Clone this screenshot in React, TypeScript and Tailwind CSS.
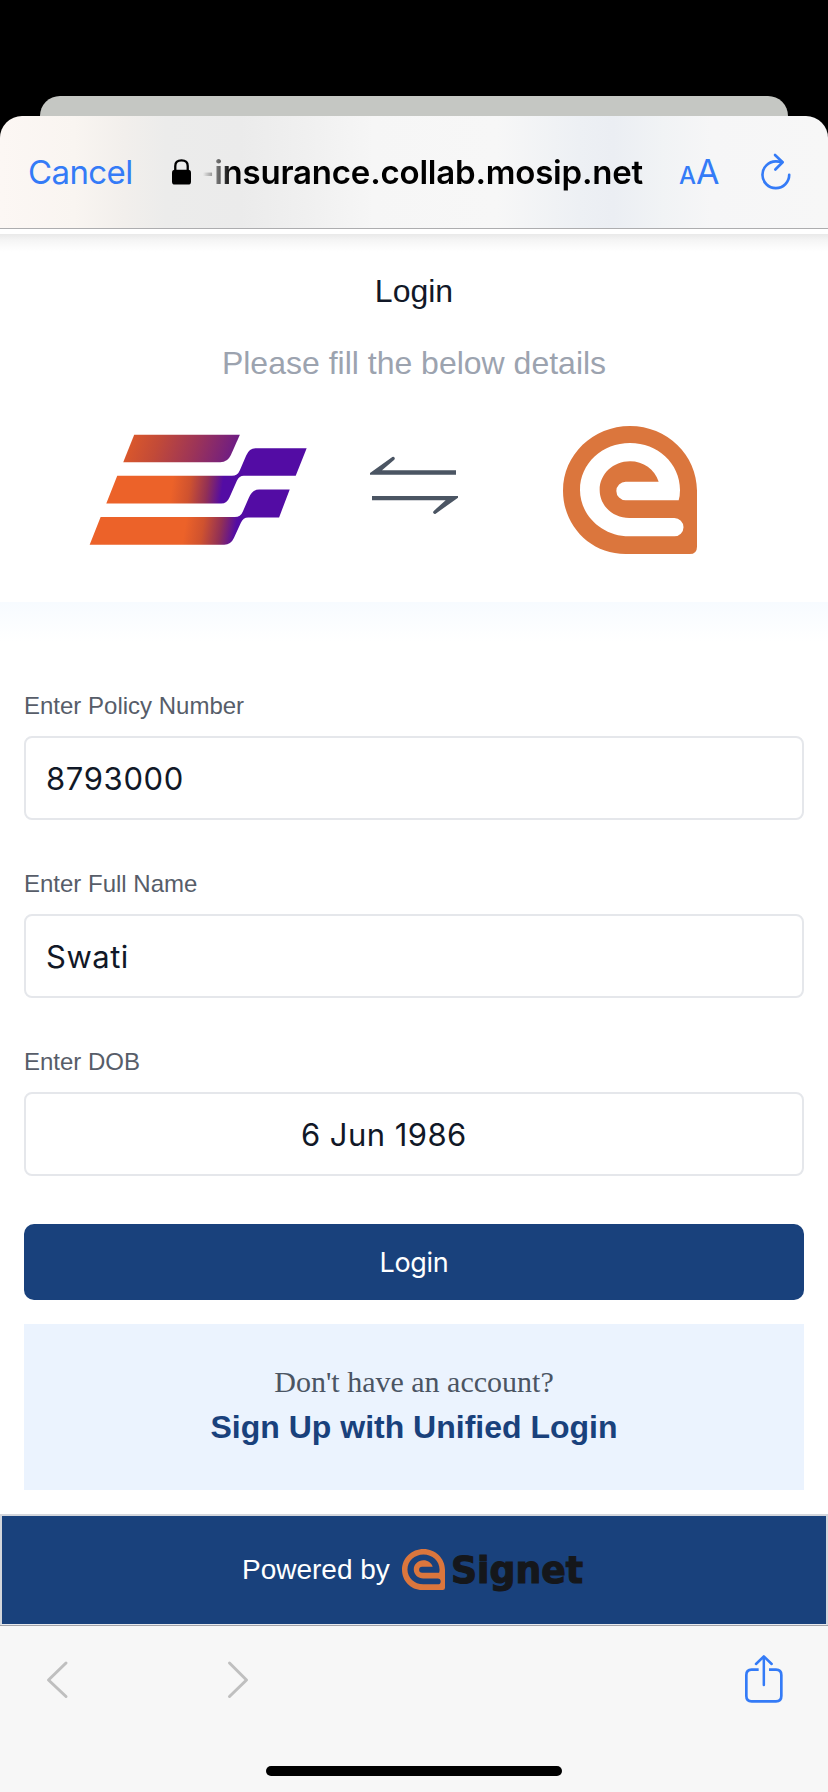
import React from "react";

const INTER = "font-['Inter',sans-serif]";

function ESymbol({ className }: { className: string }) {
  return (
    <svg viewBox="609 78 402 384" className={className} preserveAspectRatio="none" aria-hidden="true">
      <path
        fill="#db763d"
        fillRule="evenodd"
        d="M810 78C921 78 1011 165 1011 272V440Q1011 462 989 462H797C690 462 609 376 609 272C609 164 699 78 810 78ZM660 270C660 345 725 409 808 409H943A27.5 27.5 0 0 0 943 354H808C760 354 719 318 719 270C719 222 760 184 810 184C850 184 884 208 896 245H797A28 28 0 0 0 797 301H956Q960 288 960 270C960 190 893 129 810 129C727 129 660 190 660 270Z"
      />
    </svg>
  );
}

function PartnerLogo() {
  return (
    <svg viewBox="27 522 654 334" className="-mt-[3px] h-[111px] w-[218px]" aria-hidden="true">
      <defs>
        <linearGradient id="bar1" gradientUnits="userSpaceOnUse" x1="160" y1="520" x2="460" y2="620">
          <stop offset="0" stopColor="#d9572c" />
          <stop offset="0.25" stopColor="#c24a38" />
          <stop offset="0.6" stopColor="#9c3458" />
          <stop offset="1" stopColor="#6a1a88" />
        </linearGradient>
        <linearGradient id="bar2" gradientUnits="userSpaceOnUse" x1="275" y1="680" x2="425" y2="700">
          <stop offset="0" stopColor="#ec6229" />
          <stop offset="0.35" stopColor="#cf522f" />
          <stop offset="0.7" stopColor="#923055" />
          <stop offset="1" stopColor="#530ca4" />
        </linearGradient>
        <linearGradient id="bar3" gradientUnits="userSpaceOnUse" x1="315" y1="800" x2="465" y2="825">
          <stop offset="0" stopColor="#ec6229" />
          <stop offset="0.35" stopColor="#cf522f" />
          <stop offset="0.7" stopColor="#923055" />
          <stop offset="1" stopColor="#530ca4" />
        </linearGradient>
      </defs>
      <path fill="url(#bar1)" d="M162 524H480L453 585Q443 607 421 607H129Z" />
      <path
        fill="url(#bar2)"
        d="M111 648H456Q473 648 480 631L499 587Q508 565 527 565H681L648 648H492Q478 648 471 663L449 712Q441 731 424 731H78Z"
      />
      <path
        fill="url(#bar3)"
        d="M61 772H465Q482 772 489 755L507 714Q517 689 538 689H630L598 773H505Q490 773 483 789L462 835Q453 855 433 855H28Z"
      />
    </svg>
  );
}

function ExchangeArrows() {
  return (
    <svg viewBox="30 168 264 174" className="h-[58px] w-[88px]" fill="#4b5563" aria-hidden="true">
      <path d="M30 219L97 171Q101 169 104 173Q106 177 102 180L66 211H288V224H30Z" />
      <path d="M294 293L227 341Q223 343 220 339Q218 335 222 332L257 301H36V288H294Z" />
    </svg>
  );
}

function Field({ label, value, valueClass }: { label: string; value: string; valueClass: string }) {
  return (
    <div className="flex flex-col">
      <label className="h-8 text-[24px] leading-8 text-[#575d69]">{label}</label>
      <div className="mt-[14px] flex h-[84px] items-center rounded-lg border-2 border-[#e5e7eb] bg-white px-5 pt-[2px]">
        <span className={`${INTER} whitespace-pre text-[31px] leading-10 text-[#111827] ${valueClass}`}>{value}</span>
      </div>
    </div>
  );
}

function BrowserHeader() {
  return (
    <div className="bg-black">
      <div className="flex h-[116px] flex-col justify-end px-10">
        <div className="h-5 rounded-t-[20px] bg-[#c5c7c3]" />
      </div>
      <header className="flex h-[113px] items-start rounded-t-[22px] border-b border-[#adadaf] bg-[linear-gradient(90deg,#fcf7f4_0%,#f9f5f1_9%,#f2efec_15%,#ececeb_20%,#ebebeb_29%,#f0f0f0_37%,#f6f6f6_45%,#f7f7f7_60%,#edf0f4_70%,#ebeef3_74%,#f1f3f5_80%,#f6f6f7_86%,#f7f7f7_100%)] pl-7 pt-[35px]">
        <span className={`${INTER} w-[144px] text-[33px] leading-[42px] tracking-[-0.6px] text-[#347bf7]`}>Cancel</span>
        <svg viewBox="515 237 58 79" className="mt-2 h-[26px] w-[19px]" aria-hidden="true">
          <rect x="515" y="270" width="58" height="45" rx="9" />
          <path d="M525 274V258Q525 241 544 241Q563 241 563 258V274" fill="none" stroke="#000" strokeWidth="7" />
        </svg>
        <span
          className={`${INTER} ml-2 w-[445px] whitespace-nowrap bg-[linear-gradient(90deg,#00000000_4px,#00000060_14px,#00000098_21px,#000_32px)] bg-clip-text text-[33px] font-semibold leading-[42px] tracking-[-0.2px] text-transparent`}
        >
          -insurance.collab.mosip.net
        </span>
        <span className={`${INTER} ml-[35px] flex w-[40px] items-baseline leading-[42px] text-[#347bf7]`}>
          <span className="text-[24px] font-medium">A</span>
          <span className="text-[34px]">A</span>
        </span>
        <svg viewBox="1034 220 96 112" className="ml-[41px] mt-[2px] h-[37px] w-[32px]" fill="none" stroke="#347bf7" strokeWidth="8" strokeLinecap="round" strokeLinejoin="round" aria-hidden="true">
          <path d="M1122 286A40.500 40.500 0 1 1 1081.500 245.500Q1090 245.500 1101 247.500" />
          <path d="M1079 226L1102 248L1080 270" />
        </svg>
      </header>
    </div>
  );
}

export default function App() {
  return (
    <div className="flex h-[1792px] w-[828px] flex-col overflow-hidden bg-white font-['Liberation_Sans',Arial,sans-serif]">
      <BrowserHeader />
      <div className="mt-[5px] h-[18px] bg-[linear-gradient(180deg,#e9e9e9,#f5f5f5_35%,#fcfcfc_75%,#ffffff)]" />

      <section className="flex h-[350px] flex-col items-center pt-[19px]">
        <h1 className="text-[32px] leading-10 text-[#111827]">Login</h1>
        <p className="mt-8 text-[32px] leading-10 text-[#9ca3af]">Please fill the below details</p>
        <div className="mt-[42px] flex h-[132px] w-full items-center pl-[89px]">
          <PartnerLogo />
          <div className="-mt-3 ml-[63px]">
            <ExchangeArrows />
          </div>
          <ESymbol className="-mt-[2px] ml-[105px] h-32 w-[134px]" />
        </div>
      </section>

      <div className="h-10 shrink-0 bg-[linear-gradient(180deg,#f7fbff,#ffffff)]" />

      <main className="flex flex-col px-6 pt-[48px]">
        <div className="flex flex-col gap-12">
          <Field label="Enter Policy Number" value="8793000" valueClass="tracking-[0.65px]" />
          <Field label="Enter Full Name" value="Swati" valueClass="tracking-[0.5px]" />
          <Field label="Enter DOB" value="6 Jun 1986" valueClass="ml-[255px] tracking-[0.45px]" />
        </div>
        <button className={`${INTER} mt-12 h-[76px] rounded-[10px] bg-[#19417c] pt-[2px] text-[27px] tracking-[-0.3px] text-white`}>Login</button>
        <div className="mt-6 flex h-[166px] flex-col items-center bg-[#ebf3fe] pt-[38px]">
          <p className="font-['Liberation_Serif',serif] text-[30px] leading-10 text-[#4b5563]">Don't have an account?</p>
          <a className="mt-[5px] text-[32px] font-bold leading-10 text-[#19417c]">Sign Up with Unified Login</a>
        </div>
      </main>

      <footer className="mt-6 flex h-[111px] shrink-0 items-center border-2 border-b border-[#d3d6dc] border-b-[#e8eaee] bg-[#19417c] pl-[240px]">
        <span className="text-[28px] leading-10 text-white">Powered by</span>
        <ESymbol className="-mt-[2px] ml-[12px] h-[41px] w-[43px]" />
        <svg className="ml-[6px] h-[56px] w-[140px] overflow-visible" viewBox="0 0 140 56" aria-label="Signet">
          <text
            x="0"
            y="41"
            textLength="132"
            lengthAdjust="spacingAndGlyphs"
            fill="#15171b"
            stroke="#15171b"
            strokeWidth="1.2"
            className="font-['DejaVu_Sans',sans-serif] text-[38px] font-bold"
          >
            Signet
          </text>
        </svg>
      </footer>

      <nav className="flex h-[167px] shrink-0 flex-col items-center border-t border-[#a3a3a8] bg-[#f7f7f7]">
        <div className="flex h-[140px] w-full items-start pl-[46px] pt-[29px]">
          <svg viewBox="0 0 24 40" className="mt-[5px] h-10 w-6" fill="none" stroke="#bfbfbf" strokeWidth="3" strokeLinecap="round" strokeLinejoin="round" aria-label="Back">
            <path d="M20 3L2.500 20L20 36.500" />
          </svg>
          <svg viewBox="0 0 24 40" className="ml-[156px] mt-[5px] h-10 w-6" fill="none" stroke="#bfbfbf" strokeWidth="3" strokeLinecap="round" strokeLinejoin="round" aria-label="Forward">
            <path d="M3.500 3L20.500 20L3.500 36.500" />
          </svg>
          <svg viewBox="993 165 114 144" className="ml-[495px] h-12 w-[38px]" fill="none" stroke="#347bf7" strokeWidth="8" strokeLinecap="round" strokeLinejoin="round" aria-label="Share">
            <path strokeLinecap="butt" d="M1034 209H1013Q997 209 997 225V288Q997 304 1013 304H1086Q1102 304 1102 288V225Q1102 209 1086 209H1065" />
            <path d="M1049.500 255V170M1026 192L1049.500 169L1073 192" strokeWidth="7.500" />
          </svg>
        </div>
        <div className="h-[10px] w-[296px] rounded-full bg-black" />
      </nav>
    </div>
  );
}
